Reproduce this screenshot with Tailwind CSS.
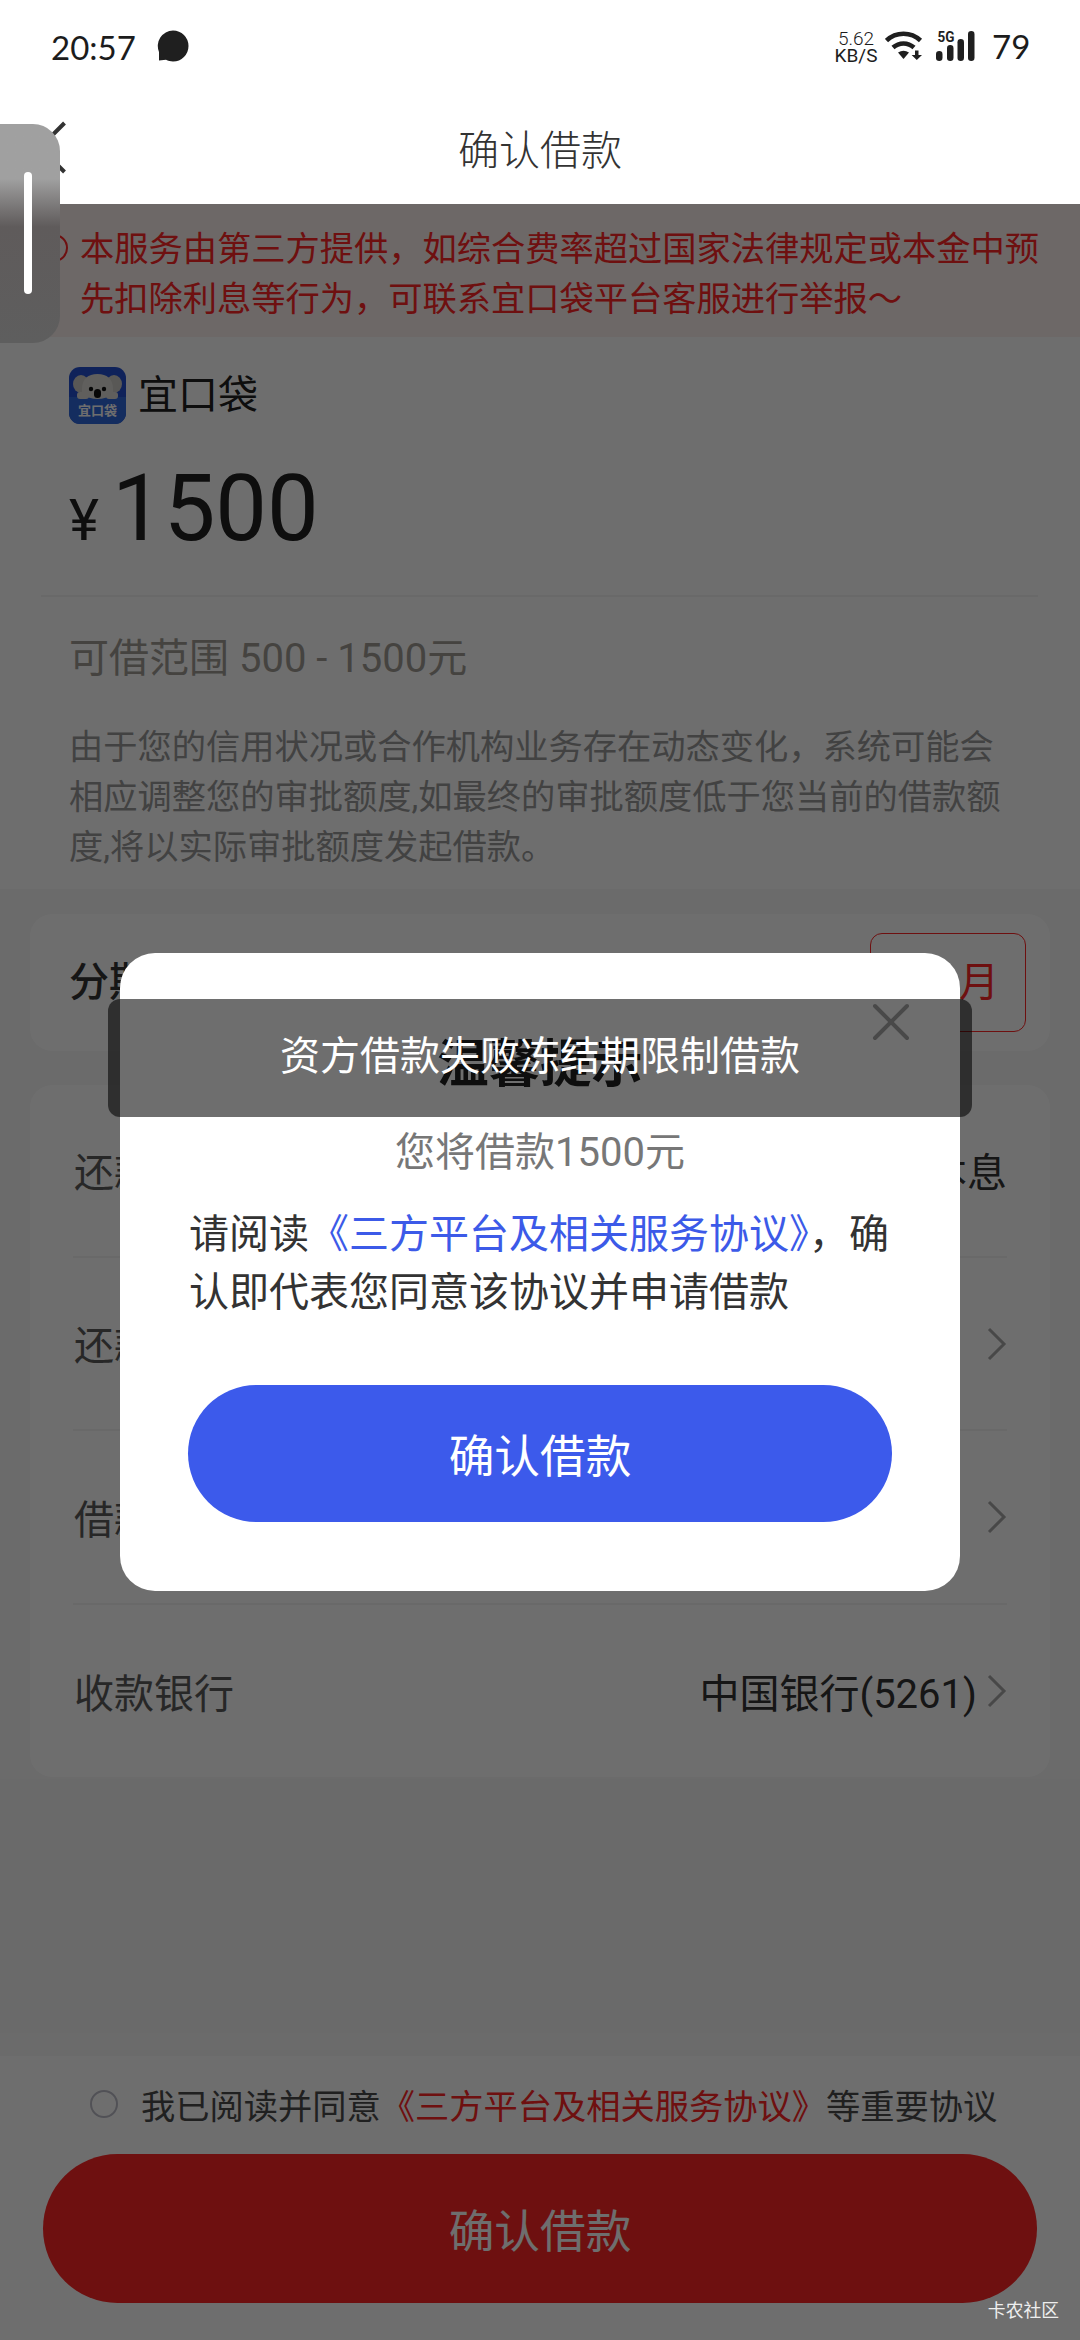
<!DOCTYPE html>
<html lang="zh-CN">
<head>
<meta charset="utf-8">
<title>确认借款</title>
<script src="https://cdn.jsdelivr.net/npm/@tailwindcss/browser@4"></script>
</head>
<body class="relative flex h-[2340px] w-[1080px] flex-col overflow-hidden bg-[#f7f7f7] font-['Roboto','Noto_Sans_CJK_SC',sans-serif] text-[40px] leading-none text-[#222]">

<!-- Status bar -->
<div class="flex h-[92px] shrink-0 items-center bg-white pr-[51px] pl-[51px] text-[#1c1c1c]">
  <span class="mt-[2px] w-[86px] font-['Lato',sans-serif] text-[33px]">20:57</span>
  <svg class="ml-[20px] h-8 w-8" viewBox="0 0 32 32" fill="#1f1f1f"><path d="M16 .5a15.500 15.500 0 1 1 0 31c-2.500 0-5-.6-7-1.700L2 30.500V22A15.500 15.500 0 0 1 16 .5z"/></svg>
  <div class="ml-auto flex w-[44px] flex-col items-center pt-[3px] text-[19px] whitespace-nowrap">
    <span class="h-[16px] leading-[16px] font-light">5.62</span>
    <span class="h-[17px] leading-[17px]">KB/S</span>
  </div>
  <svg class="ml-[7px] h-[30px] w-[38px]" viewBox="0 0 38 30" fill="none" stroke="#1f1f1f" stroke-width="4.500"><path d="M1.500 9.500C11 .5 26 .5 35.500 9.500M8 16.500c6-5.500 15-5.500 21 0"/><path d="M13 21.500q5.500-3.500 11 0l-5.500 6.500z" fill="#1f1f1f" stroke="none"/><path d="M30 19.500h3.500v4.500H37L31.800 29l-5.200-5H30z" fill="#1f1f1f" stroke="none"/></svg>
  <svg class="ml-[13px] h-[30px] w-[40px]" viewBox="0 0 40 30" fill="#1f1f1f">
    <rect x="0" y="20" width="6.500" height="10" rx="3.200"/><rect x="11" y="14" width="6.500" height="16" rx="3.200"/><rect x="21.500" y="8" width="6.500" height="22" rx="3.200"/><rect x="32" y="0" width="6.500" height="30" rx="3.200"/>
    <text x="1.500" y="11" font-size="14" font-weight="700" textLength="17" lengthAdjust="spacingAndGlyphs">5G</text>
  </svg>
  <span class="mt-[1px] ml-[16px] w-[37px] font-['Lato',sans-serif] text-[33px]">79</span>
</div>

<!-- Title bar -->
<header class="relative flex h-[112px] shrink-0 items-center justify-center bg-white pt-[6px] text-[41px] font-light text-[#333]">
  <svg class="absolute top-[28px] left-[36px] h-[54px] w-[32px]" viewBox="0 0 32 54" fill="none" stroke="#333" stroke-width="4"><path d="M28.500 3 4 27.500 28.500 52"/></svg>
  <h1>确认借款</h1>
</header>

<main class="flex flex-1 flex-col">
  <section class="bg-white">
    <div class="flex h-[133px] gap-[12px] bg-[#fdf0ef] pt-[20px] pl-[40px] text-[34.250px] leading-[50px] text-[#ff2525]">
      <svg class="mt-[10px] h-7 w-7" viewBox="0 0 28 28" fill="none" stroke="currentColor" stroke-width="2"><circle cx="14" cy="14" r="13"/><path d="M14 7v9M14 19v2"/></svg>
      <p>本服务由第三方提供，如综合费率超过国家法律规定或本金中预<br>先扣除利息等行为，可联系宜口袋平台客服进行举报～</p>
    </div>
    <div class="mt-[30px] flex h-[57px] items-center gap-[12px] pl-[69px]">
      <svg class="h-[57px] w-[57px]" viewBox="0 0 57 57">
        <rect width="57" height="57" rx="11" fill="#2450d0"/>
        <path d="M0 30h57v16a11 11 0 0 1-11 11H11A11 11 0 0 1 0 46z" fill="#2f68dc"/>
        <ellipse cx="12" cy="17" rx="8" ry="9" fill="#cfcbc7"/><ellipse cx="45" cy="17" rx="8" ry="9" fill="#cfcbc7"/>
        <path d="M13 27V21Q14 7 28.500 7T44 21v6q-7 5-15.500 5T13 27z" fill="#dedcd8"/>
        <rect x="8" y="25" width="12" height="7" rx="3" fill="#dedcd8"/><rect x="37" y="25" width="12" height="7" rx="3" fill="#dedcd8"/>
        <circle cx="22" cy="22" r="2.200" fill="#111"/><circle cx="35" cy="22" r="2.200" fill="#111"/><rect x="25" y="22" width="7" height="9" rx="3.500" fill="#111"/>
        <text x="28.500" y="48" text-anchor="middle" font-size="13" font-weight="700" fill="#fff" font-family="Noto Sans CJK SC">宜口袋</text>
      </svg>
      <span>宜口袋</span>
    </div>
    <div class="mt-[30px] flex h-[109px] items-baseline pl-[69px] leading-[109px]"><span class="text-[57px]">¥</span><span class="ml-[13px] text-[92px]">1500</span></div>
    <div class="mt-[32px] mr-[42px] ml-[41px] h-[2px] bg-[#f3f3f3]"></div>
    <p class="mt-[32px] pl-[69px] leading-[60px] text-[#a09c94]">可借范围 500 - 1500元</p>
    <p class="mt-[33px] pl-[69px] text-[34.250px] leading-[50px] text-[#999]">由于您的信用状况或合作机构业务存在动态变化，系统可能会<br>相应调整您的审批额度,如最终的审批额度低于您当前的借款额<br>度,将以实际审批额度发起借款。</p>
    <div class="h-[17px]"></div>
  </section>

  <section class="mx-[30px] mt-[25px] flex h-[137px] items-center justify-between rounded-[22px] bg-white pr-[24px] pl-[39px]">
    <span class="font-medium text-[#333]">分期</span>
    <div class="flex h-[99px] w-[156px] items-center justify-end rounded-[12px] border border-[#ff2525] pr-[26px] text-[#ff2525]">月</div>
  </section>

  <section class="mx-[30px] mt-[34px] flex flex-col rounded-[22px] bg-white px-[43px] text-[#333]">
    <div class="flex h-[173px] items-center justify-between border-b-2 border-[#f3f3f3]"><span class="pt-[7px] pl-[1px] text-[#5c5c5c]">还款</span><span class="pt-[7px]">本息</span></div>
    <div class="flex h-[173px] items-center justify-between border-b-2 border-[#f3f3f3]"><span class="pt-[7px] pl-[1px] text-[#5c5c5c]">还款</span>
      <svg class="h-[34px] w-[20px]" viewBox="0 0 20 34" fill="none" stroke="#a8a8a8" stroke-width="3"><path d="m2 2 15 15L2 32"/></svg></div>
    <div class="flex h-[174px] items-center justify-between border-b-2 border-[#f3f3f3]"><span class="pt-[7px] pl-[1px] text-[#5c5c5c]">借款</span>
      <svg class="h-[34px] w-[20px]" viewBox="0 0 20 34" fill="none" stroke="#a8a8a8" stroke-width="3"><path d="m2 2 15 15L2 32"/></svg></div>
    <div class="flex h-[172px] items-center justify-between"><span class="pt-[7px] pl-[1px] text-[#5c5c5c]">收款银行</span>
      <span class="flex items-center gap-[10px]"><span class="pt-[7px]">中国银行(5261)</span><svg class="h-[34px] w-[20px]" viewBox="0 0 20 34" fill="none" stroke="#a8a8a8" stroke-width="3"><path d="m2 2 15 15L2 32"/></svg></span></div>
  </section>
</main>

<footer class="h-[284px] shrink-0 bg-white">
  <div class="flex h-[98px] items-center pl-[90px] text-[34.250px] text-[#4c4c4c]">
    <span class="mb-[2px] h-7 w-7 rounded-full border-2 border-[#bdbdc8]"></span>
    <p class="ml-[23px] pt-[4px]">我已阅读并同意<span class="text-[#ff2525]">《三方平台及相关服务协议》</span>等重要协议</p>
  </div>
  <div class="mx-[43px] flex h-[149px] items-center justify-center rounded-full bg-[#ff2525] pt-[8px] text-[45.700px] text-white">确认借款</div>
</footer>

<!-- Scrim -->
<div class="absolute inset-x-0 top-[204px] bottom-0 bg-black/57"></div>

<!-- Dialog -->
<div class="absolute top-[953px] left-[120px] flex h-[638px] w-[840px] flex-col rounded-[35px] bg-white px-[68px] pt-[86px]">
  <svg class="absolute top-[50px] right-[50px] h-[38px] w-[38px]" viewBox="0 0 38 38" fill="none" stroke="#aaa" stroke-width="4" stroke-linecap="round"><path d="m3 3 32 32M35 3 3 35"/></svg>
  <h2 class="text-center text-[51.400px] leading-[52px] font-bold">温馨提示</h2>
  <p class="mt-[37px] text-center leading-[50px] text-[#777]">您将借款1500元</p>
  <p class="mt-[28px] pl-[1px] leading-[58px] whitespace-nowrap text-[#333]">请阅读<span class="text-[#3c5ae8]">《三方平台及相关服务协议》</span>，确<br>认即代表您同意该协议并申请借款</p>
  <div class="mt-[63px] flex h-[137px] items-center justify-center rounded-full bg-[#3c5aeb] pt-[8px] text-[45.700px] text-white">确认借款</div>
</div>

<!-- Toast -->
<div class="absolute top-[999px] left-[108px] flex h-[118px] w-[864px] items-center justify-center rounded-[12px] bg-black/57 pb-[2px] text-white">资方借款失败冻结期限制借款</div>

<!-- Edge handle -->
<div class="absolute top-[124px] left-0 h-[219px] w-[60px] rounded-r-[27px] bg-linear-to-b from-[#a0a0a0] from-25% via-[#5f5b5b] via-47% to-[#5e5e5e]"><div class="mt-[48px] ml-[24px] h-[122px] w-2 rounded-full bg-white"></div></div>

<span class="absolute right-[21px] bottom-[20px] text-[17.800px] text-[#eee]">卡农社区</span>
</body>
</html>
